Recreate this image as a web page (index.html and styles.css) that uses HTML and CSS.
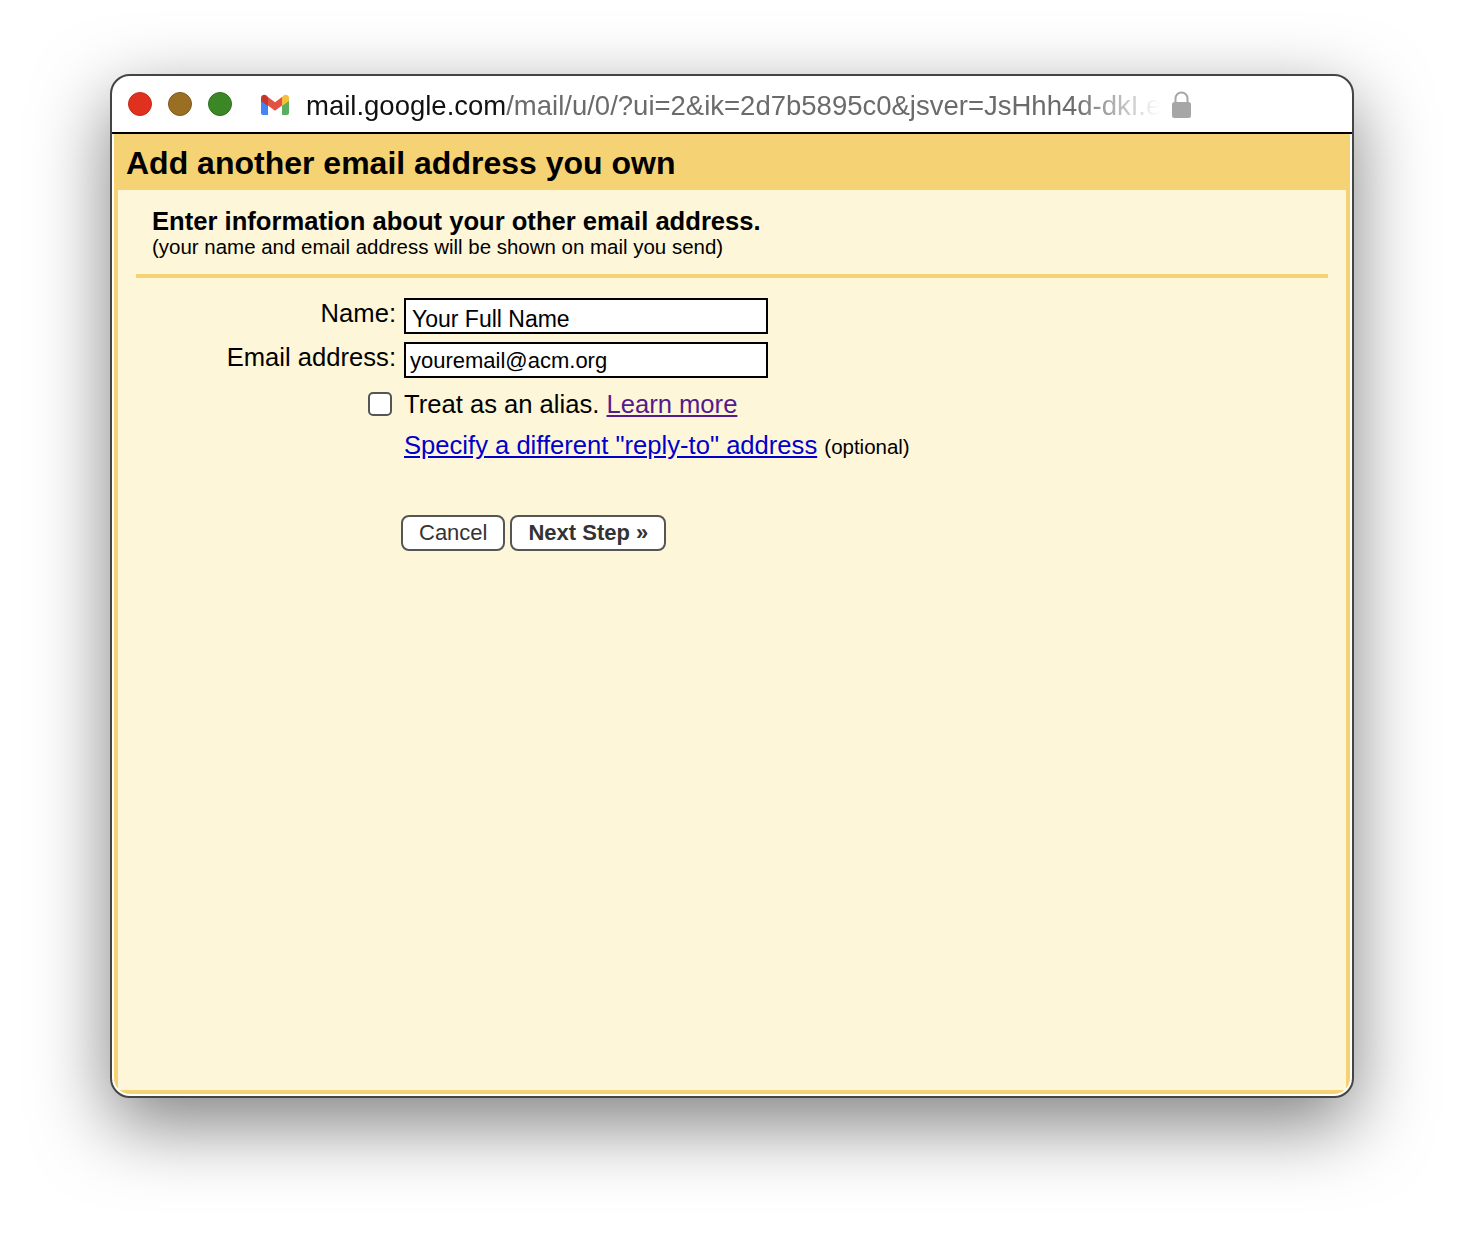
FILE: index.html
```html
<!DOCTYPE html>
<html lang="en">
<head>
<meta charset="UTF-8">
<meta name="viewport" content="width=device-width, initial-scale=1.0">
<title>Add another email address you own</title>
<link rel="stylesheet" href="styles.css">
</head>
<body>
  <div class="window">
    <div class="titlebar">
      <div class="lights">
        <span class="light red"></span>
        <span class="light brown"></span>
        <span class="light green"></span>
      </div>
      <svg class="gmail-icon" width="30" height="22" viewBox="0 0 30 22">
        <path d="M1 5v14a2 2 0 0 0 2 2h5V9z" fill="#4285f4"/>
        <path d="M29 5v14a2 2 0 0 1-2 2h-5V9z" fill="#5bae5f"/>
        <path d="M22 3v9l7-5V4c0-3-3.500-4-5.500-2.500z" fill="#f6bf3a"/>
        <path d="M8 3v9L1 7V4c0-3 3.500-4 5.500-2.500z" fill="#c5382e"/>
        <path d="M8 3l7 5.300L22 3v8.500l-7 5.300-7-5.300z" fill="#e25141"/>
      </svg>
      <div class="url"><span class="host">mail.google.com</span>/mail/u/0/?ui=2&amp;ik=2d7b5895c0&amp;jsver=JsHhh4d-dkI.en</div>
      <svg class="lock-icon" width="19" height="27" viewBox="0 0 19 27">
        <path d="M3.500 12V7.500a6 6 0 0 1 12 0V12" fill="none" stroke="#a6a6a6" stroke-width="2"/>
        <rect x="0" y="11" width="19" height="16" rx="2.500" fill="#a6a6a6"/>
      </svg>
    </div>
    <div class="dialog">
      <h1 class="dialog-title">Add another email address you own</h1>
      <div class="dialog-body">
        <div class="intro">
          <h2>Enter information about your other email address.</h2>
          <p>(your name and email address will be shown on mail you send)</p>
        </div>
        <form class="form">
          <div class="row name-row">
            <label class="field-label" for="name">Name:</label>
            <input class="name-input" type="text" id="name" value="Your Full Name">
          </div>
          <div class="row email-row">
            <label class="field-label" for="email">Email address:</label>
            <input class="email-input" type="text" id="email" value="youremail@acm.org">
          </div>
          <div class="row alias-row">
            <span class="check-cell"><span class="checkbox"></span></span>
            <span>Treat as an alias. <a class="visited" href="#">Learn more</a></span>
          </div>
          <div class="row reply-row">
            <span class="spacer"></span>
            <span><a class="link" href="#">Specify a different "reply-to" address</a> <small>(optional)</small></span>
          </div>
          <div class="buttons">
            <button type="button" class="btn">Cancel</button>
            <button type="button" class="btn btn-next">Next Step »</button>
          </div>
        </form>
      </div>
    </div>
  </div>
</body>
</html>
```

FILE: styles.css
```css
html, body {
  margin: 0;
  padding: 0;
  height: 1244px;
  overflow: hidden;
  background: #fff;
}

body {
  font-family: "Liberation Sans", Arial, sans-serif;
  color: #000;
  padding: 74px 110px 0;
  box-sizing: border-box;
}

/* Window frame */
.window {
  width: 1244px;
  height: 1024px;
  box-sizing: border-box;
  border: 2px solid #444;
  border-radius: 20px;
  background: #fff;
  box-shadow: 0 26px 76px rgba(0, 0, 0, 0.5);
  display: flex;
  flex-direction: column;
  overflow: hidden;
}

.titlebar {
  height: 56px;
  flex: none;
  display: flex;
  align-items: center;
  padding-left: 16px;
  border-bottom: 2px solid #000;
}

.lights {
  display: flex;
  gap: 16px;
}

.light {
  width: 24px;
  height: 24px;
  box-sizing: border-box;
  border-radius: 50%;
  border: 1px solid;
}

.red { background: #e0301e; border-color: #c42b1c; }
.brown { background: #9a6f24; border-color: #7e5a1c; }
.green { background: #3b8726; border-color: #2f6e1e; }

.gmail-icon {
  margin-left: 28px;
  margin-top: 2px;
  flex: none;
}

.url {
  margin-left: 16px;
  padding-top: 3px;
  width: 854px;
  white-space: nowrap;
  overflow: hidden;
  font-size: 27.500px;
  color: #6b6b6b;
  -webkit-mask-image: linear-gradient(to right, #000 90%, transparent 100%);
  mask-image: linear-gradient(to right, #000 90%, transparent 100%);
}

.host {
  color: #111;
}

.lock-icon {
  margin-left: 12px;
  flex: none;
}

/* Dialog */
.dialog {
  flex: 1;
  margin: 0 2px 2px;
  background: #f5d375;
  display: flex;
  flex-direction: column;
  border-radius: 0 0 16px 16px;
}

.dialog-title {
  margin: 0;
  height: 56px;
  line-height: 58px;
  padding-left: 12px;
  font-size: 32px;
  font-weight: bold;
}

.dialog-body {
  flex: 1;
  margin: 0 4px 4px;
  background: #fef6d8;
  padding: 0 18px;
}

.intro {
  padding: 17px 16px 15px;
  border-bottom: 4px solid #f5d375;
}

.intro h2 {
  margin: 0;
  font-size: 25.600px;
  line-height: 28px;
}

.intro p {
  margin: 0;
  font-size: 20.480px;
  line-height: 24px;
}

.form {
  font-size: 25.600px;
}

.row {
  display: flex;
  align-items: center;
}

.field-label {
  width: 260px;
  margin-right: 8px;
  text-align: right;
}

.name-row {
  margin-top: 20px;
  height: 36px;
}

.email-row {
  margin-top: 8px;
  height: 36px;
}

.name-row .field-label,
.email-row .field-label {
  margin-top: -6px;
}

input {
  width: 364px;
  height: 36px;
  box-sizing: border-box;
  border: 2px solid #000;
  background: #fff;
  color: #000;
  font-family: inherit;
  outline: none;
  border-radius: 0;
}

.name-input {
  font-size: 23px;
  padding: 7px 6px 0;
}

.email-input {
  font-size: 22px;
  padding: 2px 4px 0;
}

.alias-row {
  margin-top: 8px;
  height: 36px;
}

.check-cell {
  width: 268px;
  display: flex;
  justify-content: flex-end;
  padding-right: 12px;
  box-sizing: border-box;
}

.checkbox {
  width: 24px;
  height: 24px;
  box-sizing: border-box;
  border: 2px solid #555;
  border-radius: 5px;
  background: #fff;
}

.reply-row {
  margin-top: 5px;
  height: 36px;
}

.spacer {
  width: 268px;
}

.visited { color: #551a8b; }
.link { color: #0000cc; }

small {
  font-size: 20.480px;
}

.buttons {
  margin: 52px 0 0 265px;
  display: flex;
  gap: 5px;
}

.btn {
  height: 36px;
  padding: 0 16px;
  box-sizing: border-box;
  border: 2px solid #555;
  border-radius: 8px;
  background: #fff;
  color: #333;
  font-family: inherit;
  font-size: 22px;
}

.btn-next {
  font-weight: bold;
}
```
